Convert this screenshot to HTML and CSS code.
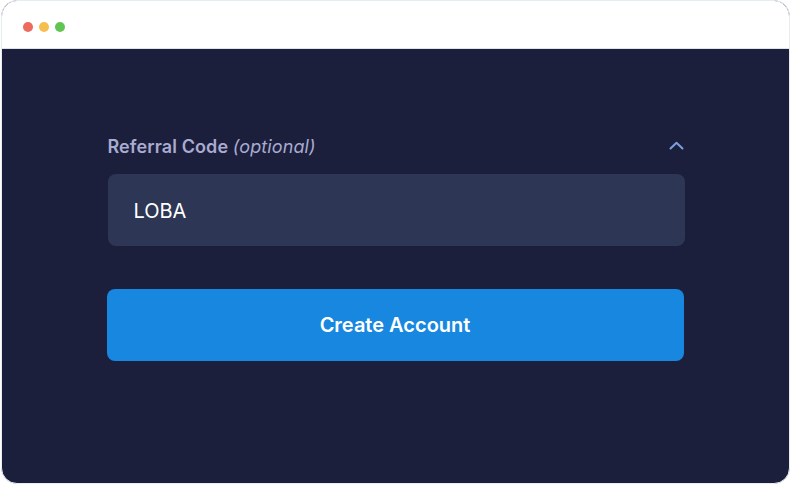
FILE: index.html
```html
<!DOCTYPE html>
<html>
<head>
<meta charset="utf-8">
<link rel="stylesheet" href="styles.css">
</head>
<body>
<div class="window">
  <div class="titlebar">
    <span class="dot red"></span>
    <span class="dot yellow"></span>
    <span class="dot green"></span>
  </div>
  <div class="content">
    <div class="form">
      <div class="label-row">
        <span class="label">Referral Code <em>(optional)</em></span>
        <svg class="chev" width="15" height="10" viewBox="0 0 15 10"><path d="M1.5 7.5 L7.5 1.8 L13.5 7.5" fill="none" stroke="#7c9fe0" stroke-width="2" stroke-linecap="round" stroke-linejoin="round"/></svg>
      </div>
      <div class="input">LOBA</div>
      <button class="btn">Create Account</button>
    </div>
  </div>
</div>
</body>
</html>
```
FILE: styles.css
```css
* { box-sizing: border-box; }
html, body { margin: 0; padding: 0; background: #ffffff; }
body { font-family: Inter, "Noto Sans", sans-serif; }
.window {
  margin: 0 1px;
  width: 789px;
  height: 484px;
  border: 1px solid #e6edf0;
  border-radius: 16px;
  overflow: hidden;
  display: flex;
  flex-direction: column;
  background: #1b1f3c;
}
.titlebar {
  height: 48px;
  background: #ffffff;
  display: flex;
  align-items: center;
  gap: 6px;
  padding-left: 21px;
  padding-top: 4px;
  border-bottom: 1px solid #dfe3e8;
}
.dot { width: 10px; height: 10px; border-radius: 50%; display: block; }
.red { background: #ec6a5e; }
.yellow { background: #f4bf4f; }
.green { background: #61c554; }
.content {
  flex: 1;
  display: flex;
  justify-content: center;
  padding-top: 88px;
}
.form { width: 578px; display: flex; flex-direction: column; }
.label-row {
  display: flex;
  justify-content: space-between;
  align-items: center;
  padding-left: 1px;
  padding-right: 1px;
  height: 20px;
}
.label { color: #a9abd0; font-size: 18px; font-weight: 600; line-height: 20px; letter-spacing: 0.1px; }
.label em { font-weight: 400; font-style: italic; }
.chev { margin-right: 0; margin-bottom: 2px; }
.input {
  margin-top: 17px;
  margin-left: 1px;
  height: 72px;
  background: #2e3655;
  border-radius: 8px;
  color: #ffffff;
  font-size: 20px;
  display: flex;
  align-items: center;
  padding-left: 26px;
  padding-top: 1px;
}
.btn {
  margin-top: 43px;
  height: 72px;
  width: 577px;
  border: none;
  border-radius: 8px;
  background: #1787e0;
  color: #ffffff;
  font-family: Inter, sans-serif;
  font-size: 20px;
  font-weight: 600;
}
```
